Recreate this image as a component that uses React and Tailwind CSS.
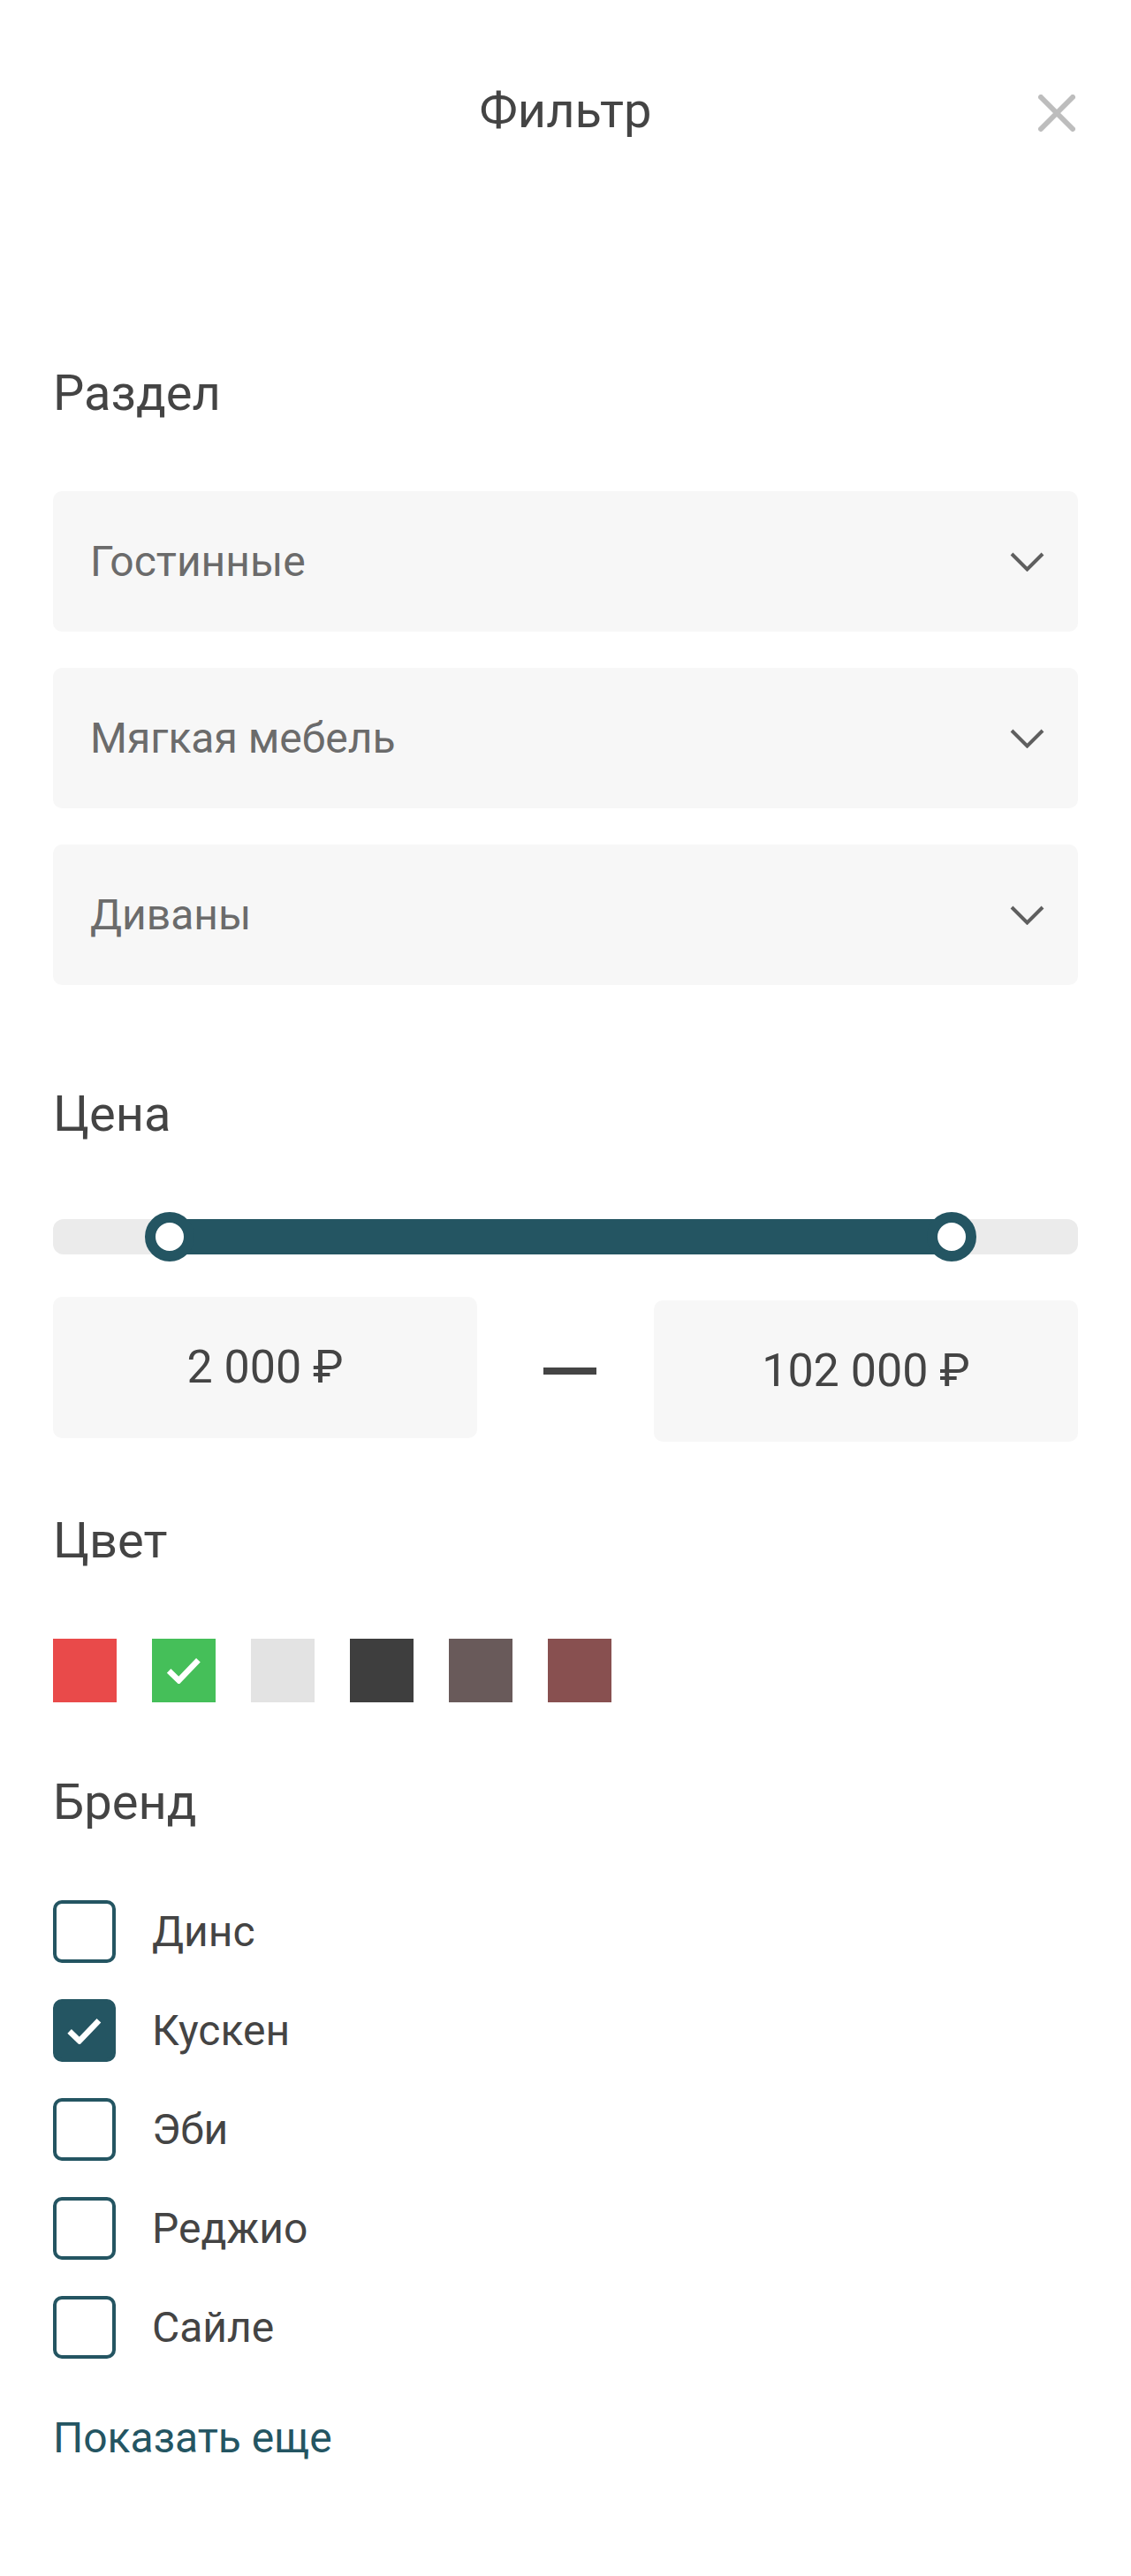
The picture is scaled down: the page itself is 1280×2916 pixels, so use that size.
import React, { useState } from 'react';

const sections = ['Гостинные', 'Мягкая мебель', 'Диваны'];

const colors = [
  { id: 'red', bg: 'bg-[#e94a4a]' },
  { id: 'green', bg: 'bg-[#45bf59]' },
  { id: 'light', bg: 'bg-[#e3e3e3]' },
  { id: 'dark', bg: 'bg-[#3e3e3e]' },
  { id: 'mauve', bg: 'bg-[#695a5a]' },
  { id: 'brown', bg: 'bg-[#885050]' },
];

const brands = ['Динс', 'Кускен', 'Эби', 'Реджио', 'Сайле'];

const CheckMark = ({ className }) => (
  <svg className={className} viewBox="0 0 42 32" fill="none">
    <path d="M3 16.5 L15 28 L38.5 3.5" stroke="white" strokeWidth="7" strokeLinejoin="miter" />
  </svg>
);

const Heading = ({ children, className = '' }) => (
  <h2 className={`text-[56px] leading-[64px] text-[#444444] ${className}`}>{children}</h2>
);

const Select = ({ label }) => (
  <button className="flex h-[159px] w-full items-center justify-between rounded-[10px] bg-[#f7f7f7] pl-[42px] pr-[38px] text-left">
    <span className="text-[48px] leading-[56px] text-[#6b6b6b]">{label}</span>
    <svg className="h-[22px] w-[39px]" viewBox="0 0 39 22" fill="none">
      <path d="M2 2 L19.5 19.5 L37 2" stroke="#5f5f5f" strokeWidth="4" />
    </svg>
  </button>
);

export default function App() {
  const [activeColor, setActiveColor] = useState('green');
  const [checked, setChecked] = useState(['Кускен']);

  const toggleBrand = (brand) => {
    setChecked(checked.includes(brand) ? checked.filter(b => b !== brand) : [...checked, brand]);
  };

  return (
    <div className="min-h-[2916px] w-full bg-white px-[60px] pt-[93px] pb-[127px] font-['Roboto',sans-serif]">
      {/* Header */}
      <div className="relative flex h-[64px] items-center justify-center">
        <h1 className="text-[56px] leading-[64px] text-[#444444]">Фильтр</h1>
        <button className="absolute right-[3px] top-[14px] h-[42px] w-[42px]">
          <svg className="h-[42px] w-[42px]" viewBox="0 0 42 42" fill="none">
            <path d="M3 3 L39 39 M39 3 L3 39" stroke="#bdbdbd" strokeWidth="6" strokeLinecap="round" />
          </svg>
        </button>
      </div>

      {/* Раздел */}
      <Heading className="mt-[256px]">Раздел</Heading>
      <div className="mt-[79px] flex flex-col gap-[41px]">
        {sections.map(s => <Select key={s} label={s} />)}
      </div>

      {/* Цена */}
      <Heading className="mt-[114px]">Цена</Heading>
      <div className="relative mt-[87px] h-[40px] rounded-[12px] bg-[#ebebeb]">
        <div className="absolute left-[132px] top-0 h-[40px] w-[885px] bg-[#245562]" />
        <div className="absolute left-[104px] top-[-8px] h-[56px] w-[56px] rounded-full border-[12px] border-[#245562] bg-white" />
        <div className="absolute left-[989px] top-[-8px] h-[56px] w-[56px] rounded-full border-[12px] border-[#245562] bg-white" />
      </div>
      <div className="mt-[48px] flex items-start justify-between">
        <div className="flex h-[160px] w-[480px] items-center justify-center rounded-[10px] bg-[#f7f7f7] text-[52px] text-[#444444]">
          2 000 ₽
        </div>
        <div className="mt-[80px] ml-[10px] h-[8px] w-[60px] bg-[#444444]" />
        <div className="mt-[4px] flex h-[160px] w-[480px] items-center justify-center rounded-[10px] bg-[#f7f7f7] text-[52px] text-[#444444]">
          102 000 ₽
        </div>
      </div>

      {/* Цвет */}
      <Heading className="mt-[80px]">Цвет</Heading>
      <div className="mt-[79px] flex gap-[40px]">
        {colors.map(c => (
          <button
            key={c.id}
            onClick={() => setActiveColor(c.id)}
            className={`flex h-[72px] w-[72px] items-center justify-center ${c.bg}`}
          >
            {activeColor === c.id && <CheckMark className="h-[30px] w-[40px]" />}
          </button>
        ))}
      </div>

      {/* Бренд */}
      <Heading className="mt-[81px]">Бренд</Heading>
      <div className="mt-[79px] flex flex-col gap-[41px]">
        {brands.map(b => {
          const isOn = checked.includes(b);
          return (
            <label key={b} className="flex cursor-pointer items-center gap-[41px]" onClick={() => toggleBrand(b)}>
              <span
                className={`flex h-[71px] w-[71px] items-center justify-center rounded-[10px] border-[4px] border-[#245562] ${isOn ? 'bg-[#245562]' : 'bg-white'}`}
              >
                {isOn && <CheckMark className="h-[30px] w-[41px]" />}
              </span>
              <span className="text-[48px] leading-[56px] text-[#444444]">{b}</span>
            </label>
          );
        })}
      </div>

      <button className="mt-[62px] text-[48px] leading-[56px] text-[#245562]">Показать еще</button>
    </div>
  );
}
